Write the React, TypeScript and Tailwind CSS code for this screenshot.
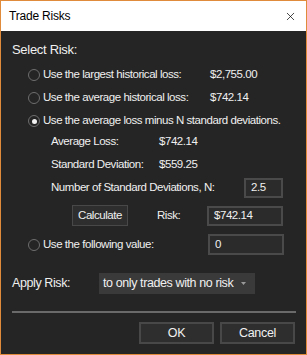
import { X } from 'lucide-react'

function Radio({ checked = false }: { checked?: boolean }) {
  return (
    <span className="flex h-3 w-3 shrink-0 items-center justify-center rounded-full border border-[#6e6e6e] bg-[#252525]">
      {checked && <span className="h-[5px] w-[5px] rounded-full bg-[#f2f2f2]" />}
    </span>
  )
}

function Field({ value, className }: { value: string; className: string }) {
  return (
    <div className={`flex shrink-0 items-center border-2 border-[#4a4a4a] bg-[#2b2b2b] px-[5px] text-[#f0f0f0] ${className}`}>
      {value}
    </div>
  )
}

function Button({ label, className }: { label: string; className: string }) {
  return (
    <button className={`flex shrink-0 items-center justify-center border border-[#484848] bg-[#2e2e2e] text-[#f0f0f0] ${className}`}>
      {label}
    </button>
  )
}

export default function App() {
  return (
    <div
      className="flex h-[355px] w-[307px] flex-col whitespace-nowrap border border-[#e08b3c] bg-[#252525] text-[11.5px] tracking-[-0.45px] text-[#f0f0f0]"
      style={{ fontFamily: '"Liberation Sans", Arial, sans-serif' }}
    >
      <div className="flex h-[30px] shrink-0 items-center justify-between bg-white pl-2 pr-[9px] text-black">
        <span className="text-[12px] tracking-[-0.2px]">Trade Risks</span>
        <X size={13} strokeWidth={1.3} />
      </div>

      <div className="flex flex-col pl-[11px] pt-[9px]">
        <div className="flex h-5 items-center text-[13px] tracking-[-0.3px]">Select Risk:</div>

        <div className="ml-4 mt-1 flex h-[22px] items-center">
          <Radio />
          <span className="ml-[3px] w-[167px]">Use the largest historical loss:</span>
          <span>$2,755.00</span>
        </div>
        <div className="ml-4 mt-px flex h-[22px] items-center">
          <Radio />
          <span className="ml-[3px] w-[167px]">Use the average historical loss:</span>
          <span>$742.14</span>
        </div>
        <div className="ml-4 mt-px flex h-[22px] items-center">
          <Radio checked />
          <span className="ml-[3px]">Use the average loss minus N standard deviations.</span>
        </div>

        <div className="ml-[39px] flex h-5 items-center">
          <span className="w-[108px]">Average Loss:</span>
          <span>$742.14</span>
        </div>
        <div className="ml-[39px] mt-[3px] flex h-5 items-center">
          <span className="w-[108px]">Standard Deviation:</span>
          <span>$559.25</span>
        </div>
        <div className="ml-[39px] mt-[3px] flex h-5 items-center">
          <span className="w-[193px]">Number of Standard Deviations, N:</span>
          <Field value="2.5" className="h-5 w-[39px]" />
        </div>

        <div className="ml-[60px] mt-[7px] flex h-[21px] items-center">
          <Button label="Calculate" className="h-[21px] w-14" />
          <span className="ml-[29px] w-[50px]">Risk:</span>
          <Field value="$742.14" className="h-5 w-[76px]" />
        </div>

        <div className="ml-4 mt-2 flex h-[21px] items-center">
          <Radio />
          <span className="ml-[3px] w-[165px]">Use the following value:</span>
          <Field value="0" className="h-[21px] w-[76px]" />
        </div>

        <div className="mt-[18px] flex h-[21px] items-center text-[12.5px] tracking-[-0.4px]">
          <span className="w-[87px]">Apply Risk:</span>
          <div className="flex h-[21px] w-[156px] items-center justify-between bg-[#3a3a3a] pl-1 pr-[9px]">
            <span>to only trades with no risk</span>
            <svg width="5" height="3" viewBox="0 0 5 3">
              <path d="M0 0h5L2.5 3z" fill="#9a9a9a" />
            </svg>
          </div>
        </div>

        <div className="mt-[17px] h-[2px] w-[284px] bg-[#6a6a6a]" />

        <div className="mt-[9px] flex h-[22px] gap-[6px] pl-[127px] text-[12.5px] tracking-[-0.3px]">
          <Button label="OK" className="h-[22px] w-[75px] border-2 border-[#4a4a4a]" />
          <Button label="Cancel" className="h-[22px] w-[75px] border-2 border-[#4a4a4a]" />
        </div>
      </div>
    </div>
  )
}
